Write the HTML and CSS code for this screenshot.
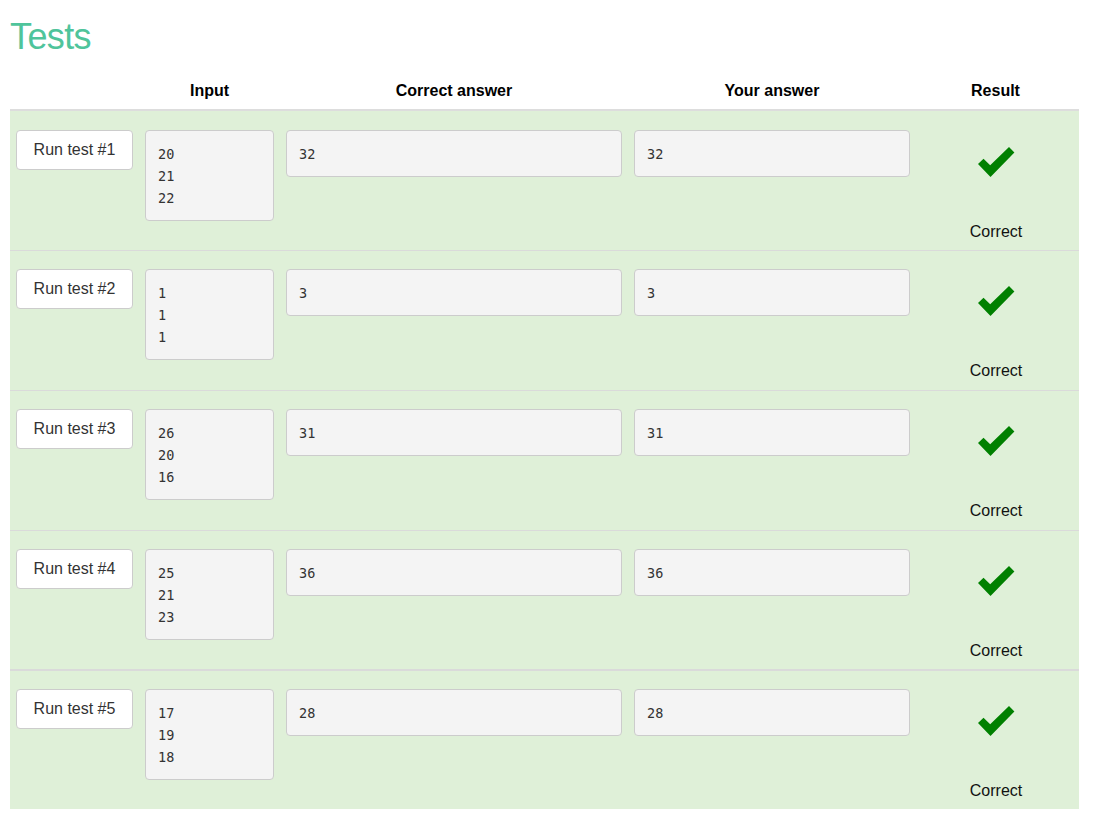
FILE: index.html
```html
<!DOCTYPE html>
<html lang="en">
<head>
<meta charset="utf-8">
<title>Tests</title>
<link rel="stylesheet" href="styles.css">
</head>
<body>
<div class="page">
  <h1 class="title">Tests</h1>
  <div class="tests">
    <div class="row head">
      <div class="cell"></div>
      <div class="cell th">Input</div>
      <div class="cell th">Correct answer</div>
      <div class="cell th">Your answer</div>
      <div class="cell th result-h">Result</div>
    </div>

    <div class="row test">
      <div class="cell"><button class="run">Run test #1</button></div>
      <div class="cell"><pre class="box">20
21
22</pre></div>
      <div class="cell"><pre class="box">32</pre></div>
      <div class="cell"><pre class="box">32</pre></div>
      <div class="cell result">
        <svg class="check" width="38" height="32" viewBox="0 0 38 32"><polygon points="1,18 6.5,12.8 13.2,19.3 32,1 37.4,6.4 13.5,31" fill="#008000"/></svg>
        <span class="verdict">Correct</span>
      </div>
    </div>

    <div class="row test">
      <div class="cell"><button class="run">Run test #2</button></div>
      <div class="cell"><pre class="box">1
1
1</pre></div>
      <div class="cell"><pre class="box">3</pre></div>
      <div class="cell"><pre class="box">3</pre></div>
      <div class="cell result">
        <svg class="check" width="38" height="32" viewBox="0 0 38 32"><polygon points="1,18 6.5,12.8 13.2,19.3 32,1 37.4,6.4 13.5,31" fill="#008000"/></svg>
        <span class="verdict">Correct</span>
      </div>
    </div>

    <div class="row test">
      <div class="cell"><button class="run">Run test #3</button></div>
      <div class="cell"><pre class="box">26
20
16</pre></div>
      <div class="cell"><pre class="box">31</pre></div>
      <div class="cell"><pre class="box">31</pre></div>
      <div class="cell result">
        <svg class="check" width="38" height="32" viewBox="0 0 38 32"><polygon points="1,18 6.5,12.8 13.2,19.3 32,1 37.4,6.4 13.5,31" fill="#008000"/></svg>
        <span class="verdict">Correct</span>
      </div>
    </div>

    <div class="row test">
      <div class="cell"><button class="run">Run test #4</button></div>
      <div class="cell"><pre class="box">25
21
23</pre></div>
      <div class="cell"><pre class="box">36</pre></div>
      <div class="cell"><pre class="box">36</pre></div>
      <div class="cell result">
        <svg class="check" width="38" height="32" viewBox="0 0 38 32"><polygon points="1,18 6.5,12.8 13.2,19.3 32,1 37.4,6.4 13.5,31" fill="#008000"/></svg>
        <span class="verdict">Correct</span>
      </div>
    </div>

    <div class="row test last">
      <div class="cell"><button class="run">Run test #5</button></div>
      <div class="cell"><pre class="box">17
19
18</pre></div>
      <div class="cell"><pre class="box">28</pre></div>
      <div class="cell"><pre class="box">28</pre></div>
      <div class="cell result">
        <svg class="check" width="38" height="32" viewBox="0 0 38 32"><polygon points="1,18 6.5,12.8 13.2,19.3 32,1 37.4,6.4 13.5,31" fill="#008000"/></svg>
        <span class="verdict">Correct</span>
      </div>
    </div>
  </div>
</div>
</body>
</html>
```

FILE: styles.css
```css
* { box-sizing: border-box; }

html, body {
  margin: 0;
  padding: 0;
  background: #fff;
}

body {
  font-family: "Liberation Sans", Arial, sans-serif;
  font-size: 16px;
  color: #111;
}

.page {
  padding: 0 10px;
  width: 1089px;
}

.title {
  margin: 17px 0 0 0;
  font-size: 36px;
  line-height: 40px;
  font-weight: normal;
  color: #4fc49b;
  letter-spacing: -0.6px;
}

.tests {
  width: 1069px;
}

.row {
  display: grid;
  grid-template-columns: 129px 141px 348px 288px 1fr;
}

.cell {
  padding: 0 6px;
  min-width: 0;
}

.head {
  height: 54px;
  padding-top: 24px;
  border-bottom: 2px solid #dddddd;
}

.th {
  text-align: center;
  font-weight: bold;
  line-height: 20px;
  color: #000;
}

.result-h {
  padding-right: 10px;
}

.test {
  height: 140px;
  background: #dff0d8;
  border-bottom: 1px solid #dadada;
  padding-top: 18px;
  align-items: start;
}

.test:nth-child(2) {
  padding-top: 19px;
}

.test:nth-child(5) {
  border-bottom-width: 2px;
}

.test.last {
  height: 138px;
  border-bottom: none;
}

.run {
  display: block;
  width: 100%;
  height: 40px;
  margin: 0;
  padding: 0 12px;
  background: #fff;
  border: 1px solid #cccccc;
  border-radius: 4px;
  font-family: "Liberation Sans", Arial, sans-serif;
  font-size: 16px;
  line-height: 20px;
  color: #333;
  text-align: center;
  cursor: pointer;
}

.box {
  margin: 0;
  padding: 12px 12px 11px 12px;
  background: #f4f4f4;
  border: 1px solid #cccccc;
  border-radius: 4px;
  font-family: "DejaVu Sans Mono", monospace;
  font-size: 13.5px;
  line-height: 22px;
  color: #333;
}

.result {
  display: flex;
  flex-direction: column;
  align-items: center;
  padding-right: 9px;
}

.check {
  display: block;
  margin-top: 16px;
}

.verdict {
  display: block;
  margin-top: 44px;
  line-height: 20px;
  color: #111;
}
```
